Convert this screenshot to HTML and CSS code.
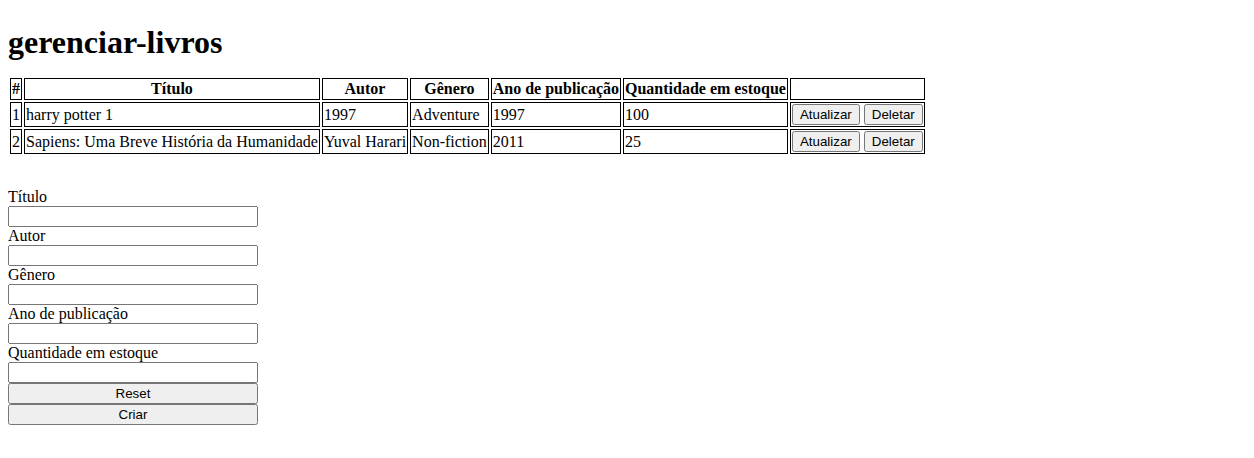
FILE: index.html
```html
<!DOCTYPE html>
<html>
<head>
<meta charset="utf-8">
<link rel="stylesheet" href="styles.css">
</head>
<body>
<h1 class="title">gerenciar-livros</h1>
<table class="books">
<thead>
<tr><th>#</th><th>Título</th><th>Autor</th><th>Gênero</th><th>Ano de publicação</th><th>Quantidade em estoque</th><th></th></tr>
</thead>
<tbody>
<tr><td>1</td><td>harry potter 1</td><td>1997</td><td>Adventure</td><td>1997</td><td>100</td><td><button class="btn">Atualizar</button> <button class="btn">Deletar</button></td></tr>
<tr><td>2</td><td>Sapiens: Uma Breve História da Humanidade</td><td>Yuval Harari</td><td>Non-fiction</td><td>2011</td><td>25</td><td><button class="btn">Atualizar</button> <button class="btn">Deletar</button></td></tr>
</tbody>
</table>
<form class="form">
<label>Título</label>
<input type="text">
<label>Autor</label>
<input type="text">
<label>Gênero</label>
<input type="text">
<label>Ano de publicação</label>
<input type="text">
<label>Quantidade em estoque</label>
<input type="text">
<button type="reset">Reset</button>
<button type="button">Criar</button>
</form>
</body>
</html>
```
FILE: styles.css
```css
body {
  margin: 8px;
  font-family: "Liberation Serif", serif;
}
.title {
  margin: 16px 0 15px;
}
.books {
  border-collapse: separate;
  border-spacing: 2px;
}
.books th,
.books td {
  border: 1px solid #000;
}
.form {
  display: flex;
  flex-direction: column;
  width: 250px;
  margin-top: 32px;
}
```
